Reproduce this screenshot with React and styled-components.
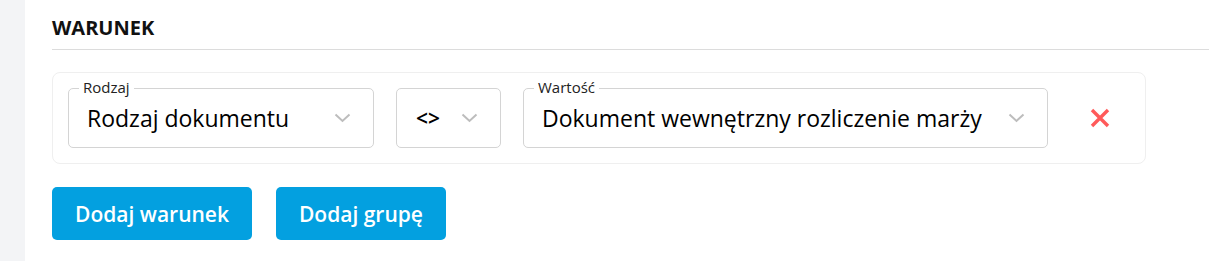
import styled, { createGlobalStyle } from "styled-components";

const Global = createGlobalStyle`
  body {
    margin: 0;
    font-family: "Open Sans", "Noto Sans", sans-serif;
    background: #fff;
  }
`;

const Page = styled.div`
  display: flex;
  height: 261px;
`;

const Rail = styled.div`
  width: 25px;
  background: #f3f4f6;
  flex-shrink: 0;
`;

const Content = styled.div`
  flex: 1;
  padding: 16px 0 0 27px;
`;

const Heading = styled.h2`
  margin: 0;
  font-size: 20px;
  font-weight: 700;
  line-height: 24px;
  color: #111;
  padding-bottom: 9px;
  border-bottom: 1px solid #dcdcdc;
`;

const Card = styled.div`
  margin-top: 22px;
  width: 1094px;
  box-sizing: border-box;
  border: 1px solid #efefef;
  border-radius: 8px;
  padding: 15px;
  display: flex;
  align-items: center;
  gap: 22px;
`;

const Field = styled.div`
  position: relative;
  width: ${(p) => p.width}px;
  height: 60px;
  box-sizing: border-box;
  border: 1px solid #d4d4d4;
  border-radius: 5px;
  display: flex;
  align-items: center;
  padding: 0 22px 0 ${(p) => p.pad || 18}px;
  gap: 12px;
`;

const Label = styled.span`
  position: absolute;
  top: -11px;
  left: 10px;
  padding: 0 4px;
  background: #fff;
  font-size: 15px;
  line-height: 18px;
  color: #222;
`;

const Value = styled.span`
  flex: 1;
  font-size: ${(p) => (p.small ? 21 : 23)}px;
  font-weight: ${(p) => (p.small ? 600 : 400)};
  color: #000;
  white-space: nowrap;
`;

const Remove = styled.button`
  border: 0;
  background: none;
  padding: 0;
  margin-left: 20px;
  display: flex;
  cursor: pointer;
`;

const Actions = styled.div`
  display: flex;
  gap: 24px;
  margin-top: 23px;
`;

const Button = styled.button`
  height: 53px;
  padding: 0 23px;
  border: 0;
  border-radius: 5px;
  background: #03a0e0;
  color: #fff;
  font-family: inherit;
  font-size: 21px;
  font-weight: 600;
`;

const Chevron = () => (
  <svg width="17" height="10" viewBox="0 0 17 10">
    <polyline points="1.5,1.5 8.5,8 15.5,1.5" fill="none" stroke="#bdbdbd" strokeWidth="2" />
  </svg>
);

const Cross = () => (
  <svg width="20" height="20" viewBox="0 0 20 20">
    <path d="M2 2 L18 18 M18 2 L2 18" stroke="#ff5a5a" strokeWidth="3.4" strokeLinecap="butt" />
  </svg>
);

export default function App() {
  return (
    <>
      <Global />
      <Page>
        <Rail />
        <Content>
          <Heading>WARUNEK</Heading>
          <Card>
            <Field width={306}>
              <Label>Rodzaj</Label>
              <Value>Rodzaj dokumentu</Value>
              <Chevron />
            </Field>
            <Field width={105} pad={19}>
              <Value small>&lt;&gt;</Value>
              <Chevron />
            </Field>
            <Field width={525}>
              <Label>Wartość</Label>
              <Value>Dokument wewnętrzny rozliczenie marży</Value>
              <Chevron />
            </Field>
            <Remove>
              <Cross />
            </Remove>
          </Card>
          <Actions>
            <Button>Dodaj warunek</Button>
            <Button>Dodaj grupę</Button>
          </Actions>
        </Content>
      </Page>
    </>
  );
}
